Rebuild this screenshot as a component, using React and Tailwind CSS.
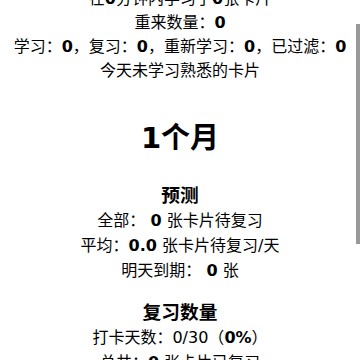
import React from 'react';

const B = ({ children }) => <b className="font-bold">{children}</b>;

export default function App() {
  return (
    <div className="relative h-[360px] w-[360px] overflow-hidden bg-white text-center text-[16px] leading-[24px] text-black font-['DejaVu_Sans','Noto_Sans_CJK_SC',sans-serif]">
      <div className="-mt-[13px] flex flex-col">
        {/* today */}
        <div>在<B>0</B>分钟内学习了<B>0</B>张卡片</div>
        <div>重来数量：<B>0</B></div>
        <div>学习：<B>0</B>，复习：<B>0</B>，重新学习：<B>0</B>，已过滤：<B>0</B></div>
        <div>今天未学习熟悉的卡片</div>

        <h1 className="mt-[37px] text-[29px] font-bold leading-[36px]">1个月</h1>

        {/* forecast */}
        <h3 className="mt-[28px] text-[18.72px] font-bold leading-[24px]">预测</h3>
        <div className="leading-[25px]">
          <div>全部： <B>0</B> 张卡片待复习</div>
          <div>平均：<B>0.0</B> 张卡片待复习/天</div>
          <div>明天到期： <B>0</B> 张</div>
        </div>

        {/* reviews */}
        <h3 className="mt-[18px] text-[18.72px] font-bold leading-[24px]">复习数量</h3>
        <div className="leading-[25px]">
          <div>打卡天数：0/30（<B>0%</B>）</div>
          <div>总共：<B>0</B> 张卡片已复习</div>
        </div>
      </div>

      {/* scrollbar thumb */}
      <div className="absolute right-0 top-[24px] h-[220px] w-[4px] bg-[#999999]" />
    </div>
  );
}
